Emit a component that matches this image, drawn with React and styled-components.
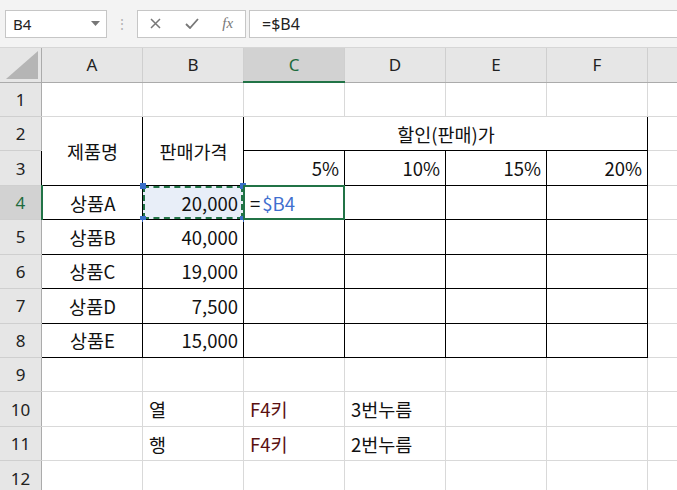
import React from 'react';
import styled, { createGlobalStyle } from 'styled-components';

const Global = createGlobalStyle`
  body { margin: 0; background: #fff; font-family: "Noto Sans CJK KR", "Noto Sans", sans-serif; overflow: hidden; }
`;

const Bar = styled.div`
  height: 48px;
  background: #f3f3f3;
  display: flex;
  align-items: center;
  padding-left: 5px;
  box-sizing: border-box;
  border-bottom: 1px solid #d6d6d6;
  font-family: "Segoe UI", "Noto Sans", sans-serif;
`;
const NameBox = styled.div`
  width: 102px;
  height: 28px;
  background: #fff;
  border: 1px solid #c6c6c6;
  display: flex;
  align-items: center;
  justify-content: space-between;
  padding: 0 6px 0 7px;
  box-sizing: border-box;
  font-size: 15px;
  color: #222;
`;
const Grip = styled.div`
  width: 30px;
  text-align: center;
  color: #b4b4b4;
  font-size: 14px;
`;
const Btns = styled.div`
  width: 109px;
  height: 28px;
  background: #fff;
  border: 1px solid #c6c6c6;
  box-sizing: border-box;
  display: flex;
  align-items: center;
  justify-content: space-around;
  color: #777;
`;
const Formula = styled.div`
  flex: 1;
  height: 28px;
  margin-left: 3px;
  background: #fff;
  border: 1px solid #c6c6c6;
  border-right: none;
  box-sizing: border-box;
  display: flex;
  align-items: center;
  padding-left: 12px;
  font-size: 16px;
  color: #222;
`;

const Table = styled.table`
  border-collapse: collapse;
  table-layout: fixed;
  width: 749px;
`;
const Corner = styled.th`
  width: 41px;
  height: 33px;
  background: #e6e6e6;
  border-right: 1px solid #ababab;
  border-bottom: 1px solid #ababab;
  position: relative;
  padding: 0;
`;
const ColHead = styled.th`
  width: 100px;
  height: 33px;
  padding: 0;
  font-weight: normal;
  font-size: 17px;
  font-family: "Segoe UI", "Noto Sans", sans-serif;
  background: ${p => (p.$sel ? '#d2d2d2' : '#e6e6e6')};
  color: ${p => (p.$sel ? '#1e6b3d' : '#222')};
  border-right: 1px solid #cfcfcf;
  border-bottom: ${p => (p.$sel ? '2px solid #217346' : '1px solid #ababab')};
`;
const RowHead = styled.th`
  height: 33.45px;
  padding: 0;
  font-weight: normal;
  font-size: 17px;
  font-family: "Segoe UI", "Noto Sans", sans-serif;
  background: ${p => (p.$sel ? '#d2d2d2' : '#e6e6e6')};
  color: ${p => (p.$sel ? '#1e6b3d' : '#222')};
  border-right: ${p => (p.$sel ? '2px solid #217346' : '1px solid #ababab')};
  border-bottom: 1px solid #cfcfcf;
`;
const Cell = styled.td`
  padding: 0 5px 0 6px;
  font-size: 18.5px;
  color: ${p => p.$color || '#111'};
  text-align: ${p => p.$align || 'left'};
  border: 1px solid ${p => (p.$box ? '#000' : '#d9d9d9')};
  background: ${p => p.$bg || '#fff'};
  white-space: nowrap;
  position: relative;
`;
const Ants = styled.div`
  position: absolute;
  inset: 0;
  border: 2px dashed #217346;
  pointer-events: none;
`;
const Dot = styled.span`
  position: absolute;
  width: 6px;
  height: 6px;
  background: #3a6fc8;
  ${p => p.$pos}
`;
const Active = styled.div`
  position: absolute;
  inset: -1px;
  border: 2px solid #217346;
  pointer-events: none;
`;
const Blue = styled.span`
  color: #3f6fcf;
  margin-left: 2px;
`;

const cols = ['A', 'B', 'C', 'D', 'E', 'F', ''];
const goods = [
  ['상품A', '20,000'],
  ['상품B', '40,000'],
  ['상품C', '19,000'],
  ['상품D', '7,500'],
  ['상품E', '15,000'],
];

export default function App() {
  const empty = n => Array.from({ length: n }, (_, i) => <Cell key={'e' + i} />);
  return (
    <>
      <Global />
      <Bar>
        <NameBox>
          <span>B4</span>
          <svg width="9" height="5"><path d="M0 0h9L4.5 5z" fill="#777" /></svg>
        </NameBox>
        <Grip>⋮</Grip>
        <Btns>
          <svg width="11" height="11"><path d="M1 1l9 9M10 1l-9 9" stroke="#777" strokeWidth="1.5" /></svg>
          <svg width="14" height="11"><path d="M1 6l4 4 8-9" stroke="#777" strokeWidth="1.8" fill="none" /></svg>
          <span style={{ fontFamily: '"Liberation Serif", serif', fontStyle: 'italic', fontSize: 15 }}>fx</span>
        </Btns>
        <Formula>=$B4</Formula>
      </Bar>
      <Table>
        <thead>
          <tr>
            <Corner>
              <svg width="32" height="28" style={{ position: 'absolute', right: 3, bottom: 3 }}>
                <path d="M32 0V28H0z" fill="#b5b5b5" />
              </svg>
            </Corner>
            {cols.map((c, i) => <ColHead key={i} $sel={c === 'C'}>{c}</ColHead>)}
          </tr>
        </thead>
        <tbody>
          <tr><RowHead>1</RowHead>{empty(7)}</tr>
          <tr>
            <RowHead>2</RowHead>
            <Cell $box rowSpan={2} $align="center">제품명</Cell>
            <Cell $box rowSpan={2} $align="center">판매가격</Cell>
            <Cell $box colSpan={4} $align="center">할인(판매)가</Cell>
            <Cell />
          </tr>
          <tr>
            <RowHead>3</RowHead>
            {['5%', '10%', '15%', '20%'].map(p => <Cell key={p} $box $align="right">{p}</Cell>)}
            <Cell />
          </tr>
          {goods.map(([n, v], i) => (
            <tr key={n}>
              <RowHead $sel={i === 0}>{i + 4}</RowHead>
              <Cell $box $align="center">{n}</Cell>
              <Cell $box $align="right" $bg={i === 0 ? '#e8eef8' : undefined}>
                {v}
                {i === 0 && (
                  <>
                    <Ants />
                    <Dot $pos="left:-3px;top:-3px;" />
                    <Dot $pos="right:-3px;top:-3px;" />
                    <Dot $pos="left:-3px;bottom:-3px;" />
                    <Dot $pos="right:-3px;bottom:-3px;" />
                  </>
                )}
              </Cell>
              <Cell $box>
                {i === 0 && (
                  <>
                    =<Blue>$B4</Blue>
                    <Active />
                  </>
                )}
              </Cell>
              <Cell $box /><Cell $box /><Cell $box />
              <Cell />
            </tr>
          ))}
          <tr><RowHead>9</RowHead>{empty(7)}</tr>
          <tr>
            <RowHead>10</RowHead>
            <Cell /><Cell>열</Cell><Cell $color="#5a1010">F4키</Cell><Cell>3번누름</Cell>{empty(3)}
          </tr>
          <tr>
            <RowHead>11</RowHead>
            <Cell /><Cell>행</Cell><Cell $color="#5a1010">F4키</Cell><Cell>2번누름</Cell>{empty(3)}
          </tr>
          <tr><RowHead>12</RowHead>{empty(7)}</tr>
        </tbody>
      </Table>
    </>
  );
}
